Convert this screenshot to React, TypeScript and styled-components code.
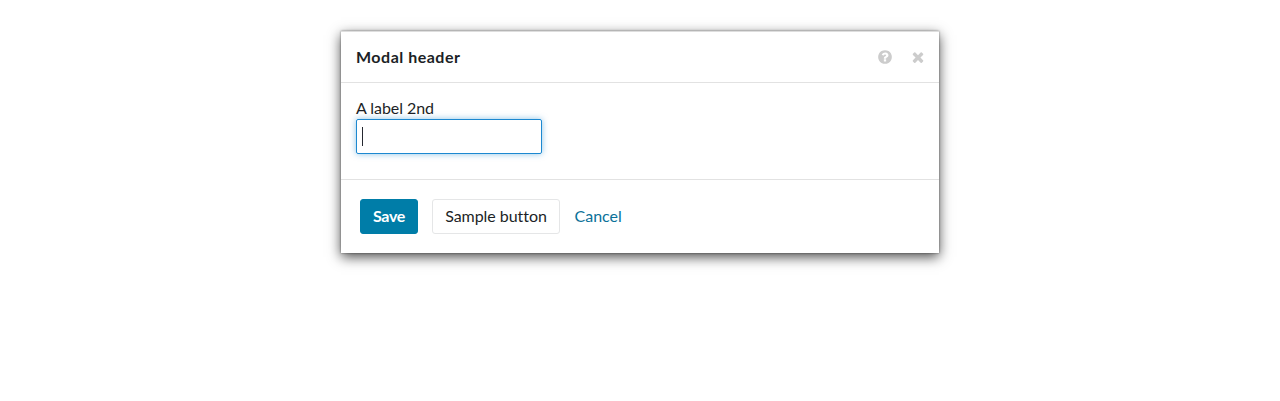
import React from "react";
import styled, { createGlobalStyle } from "styled-components";

const GlobalStyle = createGlobalStyle`
  *, *::before, *::after { box-sizing: border-box; }
  body {
    margin: 0;
    background: #fff;
    color: #1c1f26;
    font: 16px/20px Lato, "Noto Sans", sans-serif;
  }
`;

const Page = styled.main`
  display: flex;
  justify-content: center;
  align-items: flex-start;
  height: 401px;
  padding-top: 31px;
`;

const Modal = styled.section`
  width: 598px;
  border-top: 1px solid #dedede;
  background: #fff;
  box-shadow: 0 0 2px rgba(0, 0, 0, 0.45), 0 4px 12px rgba(0, 0, 0, 0.7);
`;

const Header = styled.header`
  display: flex;
  align-items: center;
  height: 51px;
  padding: 0 13px 0 15px;
  border-bottom: 1px solid #e2e2e2;
`;

const Title = styled.h1`
  flex: 1;
  margin: 0;
  font-size: 16px;
  font-weight: 700;
  letter-spacing: 0.5px;
`;

const IconButton = styled.button`
  display: flex;
  margin: 0 0 1px 17px;
  padding: 0;
  border: 0;
  background: none;
  color: #ccc;
`;

const Body = styled.div`
  height: 97px;
  padding: 15px 15px 0;
  border-bottom: 1px solid #e2e2e2;
`;

const Label = styled.label`
  display: block;
  width: max-content;
  margin-bottom: 1px;
  letter-spacing: -0.05px;
`;

const Field = styled.div`
  display: flex;
  align-items: center;
  width: 186px;
  height: 35px;
  padding-left: 5px;
  border: 1px solid #1c88d0;
  border-radius: 2px;
  box-shadow: 0 0 6px rgba(28, 136, 208, 0.5);
`;

const Caret = styled.span`
  width: 1px;
  height: 19px;
  background: #252830;
`;

const Footer = styled.footer`
  display: flex;
  align-items: center;
  height: 73px;
  padding-left: 19px;
`;

const Button = styled.button<{ $primary?: boolean }>`
  width: ${(p) => (p.$primary ? 58 : 128)}px;
  height: 35px;
  margin-right: 14px;
  padding: 0 0 2px;
  border: 1px solid ${(p) => (p.$primary ? "#007da8" : "#e5e6e7")};
  border-radius: 3px;
  background: ${(p) => (p.$primary ? "#007da8" : "#fff")};
  color: ${(p) => (p.$primary ? "#fff" : "#1c1f26")};
  font: inherit;
  font-weight: ${(p) => (p.$primary ? 700 : 400)};
  letter-spacing: ${(p) => (p.$primary ? -0.3 : -0.05)}px;
  white-space: nowrap;
`;

const CancelLink = styled.a`
  padding: 0 0 2px 0.5px;
  color: #0b7199;
`;

const Icon = ({ d }: { d: string }) => (
  <svg width="16" height="16" viewBox="0 0 1792 1792" fill="currentColor" aria-hidden="true">
    <path d={d} />
  </svg>
);

const HELP =
  "M1024 1376v-192q0-14-9-23t-23-9h-192q-14 0-23 9t-9 23v192q0 14 9 23t23 9h192q14 0 23-9t9-23zm256-672q0-88-55.5-163t-138.5-116-170-41q-243 0-371 213-15 24 8 42l132 100q7 6 19 6 16 0 25-12 53-68 86-92 34-24 86-24 48 0 85.5 26t37.5 59q0 38-20 61t-68 45q-63 28-115.5 86.5t-52.5 125.5v36q0 14 9 23t23 9h192q14 0 23-9t9-23q0-19 21.5-49.5t54.5-49.5q32-18 49-28.5t46-35 44.5-48 28-60.5 12.5-81zm384 192q0 209-103 385.5t-279.5 279.5-385.5 103-385.5-103-279.5-279.5-103-385.5 103-385.5 279.5-279.5 385.5-103 385.5 103 279.5 279.5 103 385.5z";
const CLOSE =
  "M1490 1322q0 40-28 68l-136 136q-28 28-68 28t-68-28l-294-294-294 294q-28 28-68 28t-68-28l-136-136q-28-28-28-68t28-68l294-294-294-294q-28-28-28-68t28-68l136-136q28-28 68-28t68 28l294 294 294-294q28-28 68-28t68 28l136 136q28 28 28 68t-28 68l-294 294 294 294q28 28 28 68z";

export default function App() {
  return (
    <>
      <GlobalStyle />
      <Page>
        <Modal role="dialog">
          <Header>
            <Title>Modal header</Title>
            <IconButton aria-label="Help"><Icon d={HELP} /></IconButton>
            <IconButton aria-label="Close"><Icon d={CLOSE} /></IconButton>
          </Header>
          <Body>
            <Label>A label 2nd</Label>
            <Field><Caret /></Field>
          </Body>
          <Footer>
            <Button $primary>Save</Button>
            <Button>Sample button</Button>
            <CancelLink>Cancel</CancelLink>
          </Footer>
        </Modal>
      </Page>
    </>
  );
}
